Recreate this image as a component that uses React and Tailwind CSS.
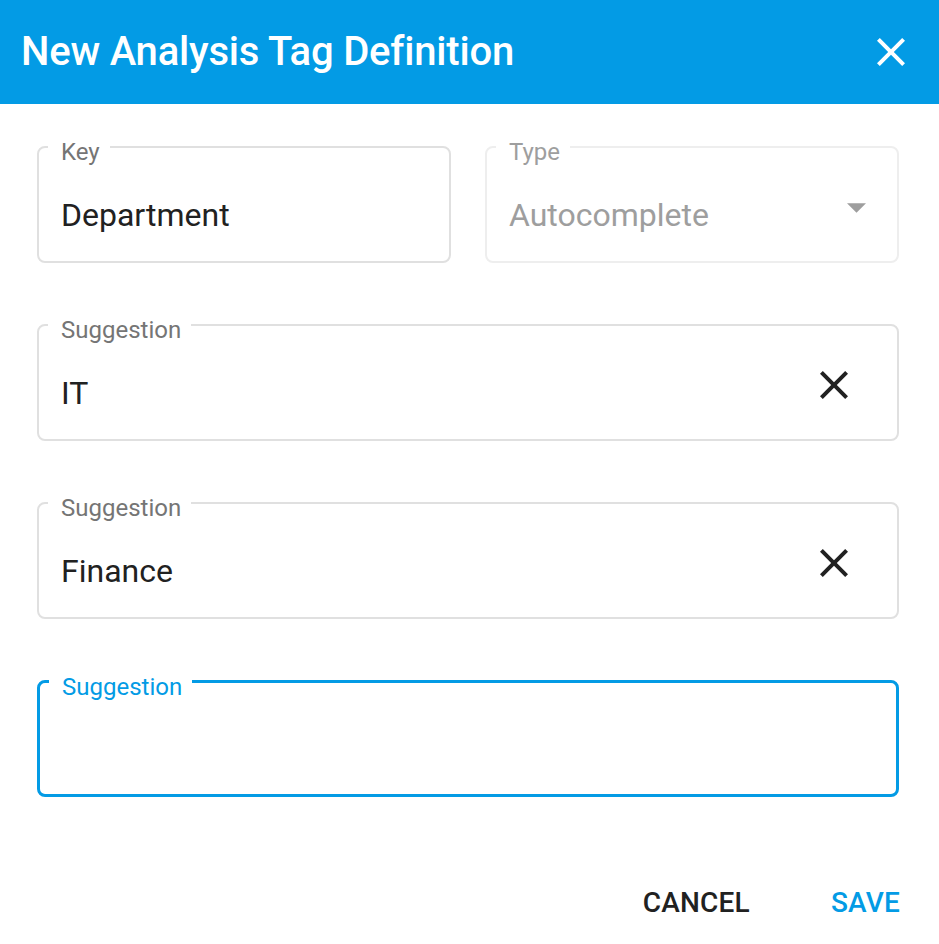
function CloseIcon({ size, className }) {
    return (
        <svg width={size} height={size} viewBox="0 0 24 24" className={className}>
            <path d="M19 6.41 17.59 5 12 10.59 6.41 5 5 6.41 10.59 12 5 17.59 6.41 19 12 13.41 17.59 19 19 17.59 13.41 12z" fill="currentColor" />
        </svg>
    );
}

function Field({ label, value, focused, disabled, clear, select }) {
    const border = focused
        ? 'border-[3px] border-[#039be5]'
        : disabled
            ? 'border-2 border-[#eeeeee]'
            : 'border-2 border-[#e0e0e0]';
    const labelColor = focused ? 'text-[#039be5]' : disabled ? 'text-[#9e9e9e]' : 'text-[#757575]';
    return (
        <div className={`relative h-[117px] rounded-[8px] ${border} flex items-center pl-[22px] pr-[40px] pt-[20px]`}>
            <span className={`absolute left-[9px] top-[-10px] bg-white pl-[13px] pr-[10px] text-[24px] leading-[28px] ${labelColor}`}>
                {label}
            </span>
            <span className={`flex-1 text-[32px] ${disabled ? 'text-[#9e9e9e]' : 'text-[#212121]'}`}>{value}</span>
            {clear && <CloseIcon size={48} className="mt-[-16px] mr-[-1px] text-[#212121]" />}
            {select && (
                <svg width="19" height="10" viewBox="0 0 20 10" className="mt-[-14px] mr-[-9px]">
                    <path d="M0 0 L20 0 L10 10 Z" fill="#9e9e9e" />
                </svg>
            )}
        </div>
    );
}

export default function App() {
    return (
        <div className="w-[939px] h-[944px] bg-white font-['Roboto',sans-serif]">
            <div className="h-[104px] bg-[#039be5] flex items-center justify-between pl-[21px] pr-[24px]">
                <h1 className="text-white text-[40px] font-medium tracking-[-0.2px]">New Analysis Tag Definition</h1>
                <CloseIcon size={48} className="text-white" />
            </div>
            <div className="pl-[37px] pr-[40px] pt-[42px] flex flex-col gap-[61px]">
                <div className="flex gap-[34px]">
                    <div className="flex-1">
                        <Field label="Key" value="Department" />
                    </div>
                    <div className="flex-1">
                        <Field label="Type" value="Autocomplete" disabled select />
                    </div>
                </div>
                <Field label="Suggestion" value="IT" clear />
                <Field label="Suggestion" value="Finance" clear />
                <Field label="Suggestion" value="" focused />
            </div>
            <div className="flex justify-end items-center gap-[81px] pr-[39px] pt-[85px]">
                <button className="text-[28px] font-medium text-[#212121] tracking-[0.2px]">CANCEL</button>
                <button className="text-[28px] font-medium text-[#039be5] tracking-[0.2px]">SAVE</button>
            </div>
        </div>
    );
}
